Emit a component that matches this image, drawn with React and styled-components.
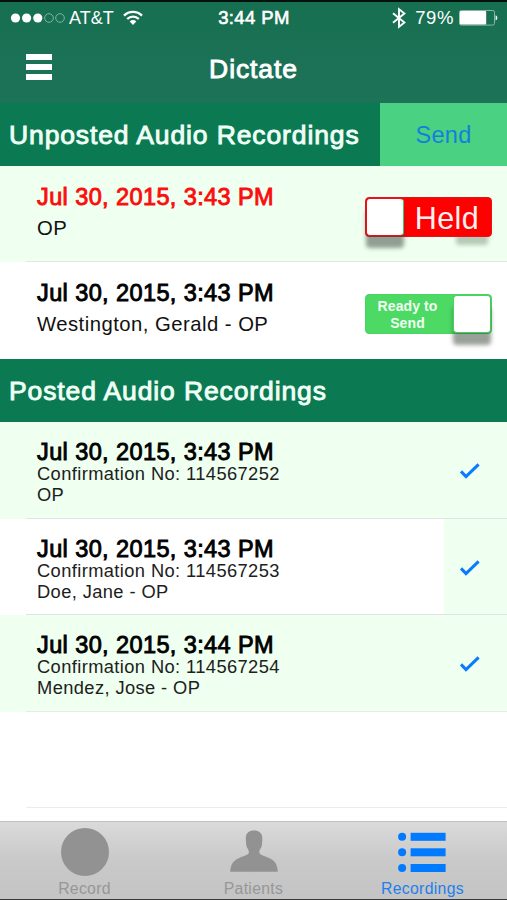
import React, { useState } from 'react'
import styled, { createGlobalStyle } from 'styled-components'

const unposted = [
  { id: 1, date: 'Jul 30, 2015, 3:43 PM', name: 'OP', held: true },
  {
    id: 2,
    date: 'Jul 30, 2015, 3:43 PM',
    name: 'Westington, Gerald - OP',
    held: false,
  },
]

const posted = [
  { no: '114567252', date: 'Jul 30, 2015, 3:43 PM', name: 'OP' },
  { no: '114567253', date: 'Jul 30, 2015, 3:43 PM', name: 'Doe, Jane - OP' },
  { no: '114567254', date: 'Jul 30, 2015, 3:44 PM', name: 'Mendez, Jose - OP' },
]

const SignalIcon = () => (
  <svg width='56' height='12' viewBox='0 0 56 12'>
    <g fill='#fff'>
      <circle cx='5.5' cy='6' r='4.6' />
      <circle cx='16.6' cy='6' r='4.6' />
      <circle cx='27.8' cy='6' r='4.6' />
    </g>
    <g fill='none' stroke='#7fb3a1' strokeWidth='1'>
      <circle cx='39' cy='6' r='4.3' />
      <circle cx='50' cy='6' r='4.3' />
    </g>
  </svg>
)

const WifiIcon = () => (
  <svg width='20' height='16' viewBox='0 0 20 16'>
    <g fill='none' stroke='#fff' strokeWidth='2.3'>
      <path d='M1 5.6a12.8 12.8 0 0 1 18 0' />
      <path d='M4.2 9a8.2 8.2 0 0 1 11.6 0' />
    </g>
    <path d='M6.7 11.4a4.7 4.7 0 0 1 6.6 0L10 14.9z' fill='#fff' />
  </svg>
)

const BluetoothIcon = () => (
  <svg width='14' height='22' viewBox='0 0 14 22'>
    <path
      d='M1 6.2l11.4 9.4-5.4 4.3V2.1l5.4 4.3L1 15.8'
      fill='none'
      stroke='#fff'
      strokeWidth='1.9'
    />
  </svg>
)

const BatteryIcon = () => (
  <svg width='39' height='16' viewBox='0 0 39 16'>
    <rect
      x='0.5'
      y='0.5'
      width='35'
      height='14.6'
      rx='1.8'
      fill='none'
      stroke='#8ab8a8'
    />
    <rect x='0.8' y='1' width='26.4' height='13.6' rx='1' fill='#fff' />
    <path d='M36.6 5.2c2.3.9 2.3 4.3 0 5.2z' fill='#fff' />
  </svg>
)

const CheckIcon = () => (
  <svg width='22' height='18' viewBox='0 0 22 18'>
    <path
      d='M2 9.4l5 5.1L19.6 2.4'
      fill='none'
      stroke='#0a7aff'
      strokeWidth='3.1'
    />
  </svg>
)

const RecordIcon = () => (
  <svg width='48' height='48' viewBox='0 0 48 48'>
    <circle cx='24' cy='24' r='24' fill='#929292' />
  </svg>
)

const PatientsIcon = () => (
  <svg width='48' height='48' viewBox='0 0 48 48'>
    <path
      fill='#929292'
      d='M24 2.6c5 0 8.3 2.6 8.3 7.6 0 2.3-.1 4.8-.5 7.3-.3 2.2-2.6 4.6-2.6 6.5 0 3.6 7.3 4.3 12.3 7.2 4.3 2.5 6 6.8 6.3 12.6H.2c.3-5.8 2.2-10.1 6.5-12.6 5-2.9 12.3-3.6 12.3-7.2 0-1.9-2.400-4.300-2.700-6.500-.4-2.500-.5-5-.5-7.300 0-5 3.200-7.600 8.200-7.600z'
    />
  </svg>
)

const RecordingsIcon = () => (
  <svg width='50' height='48' viewBox='0 0 50 48'>
    <g fill='#007aff'>
      <circle cx='4.1' cy='8.8' r='4' />
      <circle cx='4.1' cy='24.3' r='4' />
      <circle cx='4.1' cy='40' r='4' />
      <rect x='12.6' y='4.8' width='35' height='8' />
      <rect x='12.6' y='20.3' width='35' height='8' />
      <rect x='12.6' y='36' width='35' height='8' />
    </g>
  </svg>
)

const HoldSwitch = ({ held, onToggle }) => (
  <Switch type='button' $held={held} onClick={onToggle}>
    <SwitchLabel $held={held}>{held ? 'Held' : 'Ready to Send'}</SwitchLabel>
    <Knob $held={held} />
  </Switch>
)

const App = () => {
  const [items, setItems] = useState(unposted)

  const toggle = (id) =>
    setItems(items.map((e) => (e.id === id ? { ...e, held: !e.held } : e)))

  return (
    <StyledPhone>
      <GlobalStyle />
      <TopBar>
        <StatusBar>
          <StatusSide>
            <SignalIcon />
            <Carrier>AT&amp;T</Carrier>
            <WifiIcon />
          </StatusSide>
          <Clock>3:44 PM</Clock>
          <StatusSide $right>
            <BluetoothIcon />
            <Percent>79%</Percent>
            <BatteryIcon />
          </StatusSide>
        </StatusBar>
        <NavBar>
          <MenuButton type='button' aria-label='Menu'>
            <span />
            <span />
            <span />
          </MenuButton>
          <h1>Dictate</h1>
        </NavBar>
      </TopBar>

      <SectionHeader>
        <h2>Unposted Audio Recordings</h2>
        <SendButton type='button'>Send</SendButton>
      </SectionHeader>
      {items.map((e, i) => (
        <Row key={e.id} $tinted={i % 2 === 0} $height={i === 0 ? 96 : 97}>
          <RowBody $line={i === 0 ? '#dfe9e0' : 'transparent'}>
            <Info>
              <RecordedAt $held={e.held}>{e.date}</RecordedAt>
              <Patient>{e.name}</Patient>
            </Info>
            <HoldSwitch held={e.held} onToggle={() => toggle(e.id)} />
          </RowBody>
        </Row>
      ))}

      <SectionHeader>
        <h2>Posted Audio Recordings</h2>
      </SectionHeader>
      {posted.map((e, i) => (
        <Row key={e.no} $tinted={i % 2 === 0} $height={i === 1 ? 96 : 97}>
          <RowBody $line={i === 2 ? '#e3ece3' : '#dfe5e0'}>
            <Info $tight>
              <RecordedAt>{e.date}</RecordedAt>
              <Detail>Confirmation No: {e.no}</Detail>
              <Detail>{e.name}</Detail>
            </Info>
            <Accessory>
              <CheckIcon />
            </Accessory>
          </RowBody>
        </Row>
      ))}
      <Row $height={96}>
        <RowBody $line='#ececec' />
      </Row>

      <TabBar>
        <Tab type='button'>
          <RecordIcon />
          Record
        </Tab>
        <Tab type='button'>
          <PatientsIcon />
          Patients
        </Tab>
        <Tab type='button' $active>
          <RecordingsIcon />
          Recordings
        </Tab>
      </TabBar>
    </StyledPhone>
  )
}

const GlobalStyle = createGlobalStyle`
  * {
    box-sizing: border-box;
  }
  body {
    margin: 0;
    background: #fff;
    font-family: 'Liberation Sans', Arial, sans-serif;
  }
  h1, h2, p {
    margin: 0;
    font-weight: 400;
  }
  button {
    border: 0;
    padding: 0;
    font-family: inherit;
    cursor: pointer;
  }
  svg {
    display: block;
    flex-shrink: 0;
  }
`

const StyledPhone = styled.div`
  display: flex;
  flex-direction: column;
  width: 507px;
  height: 900px;
  overflow: hidden;
  background: #fff;
  border-bottom: 1px solid #3a3a3a;
`

const TopBar = styled.header`
  height: 103px;
  flex-shrink: 0;
  border-top: 2px solid #04120d;
  background: linear-gradient(#176f52, #1d7357);
  color: #fff;
`

const StatusBar = styled.div`
  display: grid;
  grid-template-columns: 1fr auto 1fr;
  align-items: center;
  height: 31px;
  padding: 0 9px 0 10px;
  font-size: 18px;
  line-height: 22px;
`

const StatusSide = styled.div`
  display: flex;
  align-items: center;
  justify-content: ${(props) => (props.$right ? 'flex-end' : 'flex-start')};
`

const Carrier = styled.span`
  margin: 1px 9px 0 3px;
`

const Clock = styled.span`
  font-size: 18.5px;
  letter-spacing: 0.4px;
  -webkit-text-stroke: 0.6px #fff;
`

const Percent = styled.span`
  margin: 1px 5px 0 9px;
  font-size: 18.5px;
  letter-spacing: 0.6px;
`

const NavBar = styled.div`
  display: grid;
  grid-template-columns: 1fr auto 1fr;
  align-items: center;
  height: 66px;
  padding: 0 26px;
  h1 {
    margin-top: 5px;
    font-size: 26.5px;
    line-height: 30px;
    letter-spacing: 0.9px;
    -webkit-text-stroke: 0.9px #fff;
  }
`

const MenuButton = styled.button`
  display: flex;
  flex-direction: column;
  gap: 4px;
  width: 26px;
  margin-top: 1px;
  background: none;
  span {
    height: 6px;
    background: #fff;
  }
`

const SectionHeader = styled.div`
  display: flex;
  align-items: stretch;
  justify-content: space-between;
  flex-shrink: 0;
  height: 63px;
  padding-left: 9px;
  background: #0b7a53;
  h2 {
    align-self: center;
    margin-top: 1px;
    font-size: 26.5px;
    line-height: 30px;
    letter-spacing: 0.88px;
    white-space: nowrap;
    color: #f0fff6;
    -webkit-text-stroke: 0.9px #f0fff6;
  }
`

const SendButton = styled.button`
  width: 127px;
  padding-top: 2px;
  background: #4ad181;
  color: #1280dc;
  font-size: 23.5px;
  letter-spacing: 0.3px;
`

const Row = styled.div`
  position: relative;
  z-index: 0;
  flex-shrink: 0;
  height: ${(props) => props.$height}px;
  padding-left: 26px;
  background: ${(props) => (props.$tinted ? '#effff0' : '#fff')};
`

const RowBody = styled.div`
  display: flex;
  justify-content: space-between;
  height: 100%;
  padding-left: 11px;
  border-bottom: 1px solid ${(props) => props.$line};
`

const Info = styled.div`
  padding-top: ${(props) => (props.$tight ? 19 : 20)}px;
  white-space: nowrap;
`

const RecordedAt = styled.p`
  font-size: 23.5px;
  line-height: 22px;
  letter-spacing: 0.4px;
  color: ${(props) => (props.$held ? '#fb0d0d' : '#000')};
  -webkit-text-stroke: 0.9px ${(props) => (props.$held ? '#fb0d0d' : '#000')};
`

const Patient = styled.p`
  margin-top: 8px;
  font-size: 20.3px;
  line-height: 24px;
  letter-spacing: 0.47px;
  color: #111;
`

const Detail = styled.p`
  font-size: 18.3px;
  line-height: 21px;
  letter-spacing: 0.4px;
  color: #1c211c;
`

const Accessory = styled.div`
  display: flex;
  align-items: center;
  width: 63px;
  padding: 2px 0 0 15px;
  background: #effff0;
`

const Switch = styled.button`
  position: relative;
  display: flex;
  flex-direction: ${(props) => (props.$held ? 'row-reverse' : 'row')};
  align-items: center;
  align-self: flex-start;
  width: 127px;
  height: 40px;
  margin: ${(props) => (props.$held ? 31 : 32)}px 15.5px 0 0;
  border: 1px solid ${(props) => (props.$held ? '#e8131a' : '#49d363')};
  border-radius: 4px;
  background: ${(props) => (props.$held ? '#fe0000' : '#4cd964')};
  &::after {
    content: '';
    display: ${(props) => (props.$held ? 'block' : 'none')};
    position: absolute;
    z-index: -1;
    right: 3px;
    bottom: -9px;
    width: 32px;
    height: 20px;
    border-radius: 3px;
    background: rgba(60, 90, 60, 0.32);
    filter: blur(2px);
  }
`

const SwitchLabel = styled.span`
  flex: 1;
  text-align: center;
  color: ${(props) => (props.$held ? '#fff0f0' : '#f0fff2')};
  font-size: ${(props) => (props.$held ? 30.5 : 14)}px;
  line-height: ${(props) => (props.$held ? 38 : 17)}px;
  font-weight: ${(props) => (props.$held ? 400 : 700)};
  letter-spacing: ${(props) => (props.$held ? 0.4 : 0.1)}px;
  padding: ${(props) => (props.$held ? '2px 0 0' : '1px 13px 0 10px')};
`

const Knob = styled.span`
  width: 38px;
  height: 38px;
  border: 1px solid ${(props) => (props.$held ? '#e8131a' : '#49d363')};
  border-right-color: #49c363;
  border-radius: 4px;
  background: #fff;
  box-shadow: 0 12px 4px 0 rgba(60, 70, 60, 0.52);
`

const TabBar = styled.nav`
  display: grid;
  grid-template-columns: repeat(3, 1fr);
  flex-shrink: 0;
  height: 78px;
  margin-top: auto;
  border-top: 1px solid #c0c0c0;
  background: linear-gradient(#dadada, #c9c9c9 50%, #c4c4c4);
`

const Tab = styled.button`
  display: flex;
  flex-direction: column;
  align-items: center;
  gap: 4px;
  padding-top: 6px;
  background: none;
  font-size: 15.8px;
  line-height: 18px;
  letter-spacing: 0.3px;
  color: ${(props) => (props.$active ? '#1e80ea' : '#979797')};
`

export default App
